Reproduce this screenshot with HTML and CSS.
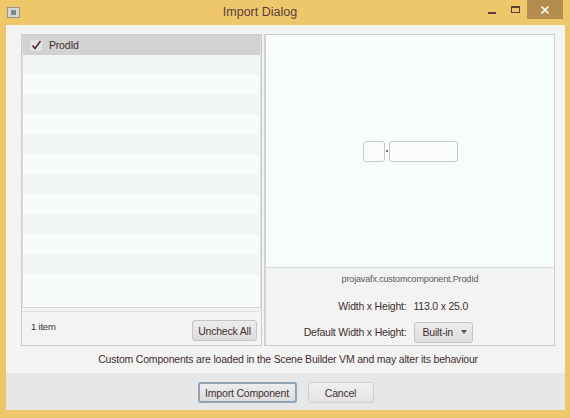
FILE: index.html
```html
<!DOCTYPE html>
<html>
<head>
<meta charset="utf-8">
<link rel="stylesheet" href="styles.css">
</head>
<body>
<div class="window">
  <div class="titlebar">
    <div class="appicon"><div class="appicon-inner"></div></div>
    <div class="title">Import Dialog</div>
    <div class="controls">
      <div class="ctl min"><div class="min-bar"></div></div>
      <div class="ctl max"><div class="max-box"></div></div>
      <div class="ctl close">
        <svg width="10" height="10" viewBox="0 0 10 10"><path d="M1.5 1.5 L8.5 8.5 M8.5 1.5 L1.5 8.5" stroke="#fff" stroke-width="1.6"/></svg>
      </div>
    </div>
  </div>
  <div class="content">
    <div class="main">
      <div class="panels">
        <div class="left">
          <div class="list">
            <div class="row selected">
              <div class="checkbox">
                <svg width="11" height="10" viewBox="0 0 11 10"><path d="M1.5 5.5 L4 8.5 L9.5 1" fill="none" stroke="#5a2626" stroke-width="1.6"/></svg>
              </div>
              <span>ProdId</span>
            </div>
            <div class="row"></div><div class="row"></div><div class="row"></div>
            <div class="row"></div><div class="row"></div><div class="row"></div>
            <div class="row"></div><div class="row"></div><div class="row"></div>
            <div class="row"></div><div class="row"></div><div class="row"></div>
          </div>
          <div class="footer">
            <span class="count">1 item</span>
            <button class="btn">Uncheck All</button>
          </div>
        </div>
        <div class="right">
          <div class="preview">
            <div class="comp">
              <div class="box small"></div>
              <div class="dot"></div>
              <div class="box big"></div>
            </div>
          </div>
          <div class="classname">projavafx.customcomponent.ProdId</div>
          <div class="info">
            <div class="lbl">Width x Height:</div>
            <div class="val">113.0 x 25.0</div>
            <div class="lbl">Default Width x Height:</div>
            <div class="val"><div class="combo">Built-in <span class="arrow"></span></div></div>
          </div>
        </div>
      </div>
      <div class="message">Custom Components are loaded in the Scene Builder VM and may alter its behaviour</div>
    </div>
    <div class="buttonbar">
      <button class="btn default">Import Component</button>
      <button class="btn cancel">Cancel</button>
    </div>
  </div>
</div>
</body>
</html>
```

FILE: styles.css
```css
* { box-sizing: border-box; }
html, body { margin: 0; padding: 0; }
body {
  width: 570px;
  height: 418px;
  background: #efc76b;
  font-family: "Liberation Sans", Arial, sans-serif;
  font-size: 10.5px;
  letter-spacing: -0.2px;
  color: #42302f;
  overflow: hidden;
}
.window {
  height: 418px;
  display: flex;
  flex-direction: column;
}
.titlebar {
  height: 25px;
  position: relative;
  display: flex;
  align-items: center;
  justify-content: center;
}
.appicon {
  position: absolute;
  left: 7px;
  top: 7px;
  width: 13px;
  height: 11px;
  background: #d8d6cf;
  border: 1px solid #9a9488;
}
.appicon-inner {
  margin: 2px 3px;
  width: 5px;
  height: 5px;
  background: #7f8a92;
}
.title {
  font-size: 12.5px;
  letter-spacing: 0;
  color: #5c3c3c;
  margin-top: -1px;
  margin-left: -50px;
}
.controls {
  position: absolute;
  right: 7px;
  top: 0;
  display: flex;
  height: 19px;
}
.ctl {
  display: flex;
  align-items: center;
  justify-content: center;
}
.min { width: 24px; }
.min-bar { width: 8px; height: 2px; background: #5c3c3c; margin-top: 6px; }
.max { width: 23px; }
.max-box { width: 9px; height: 7px; border: 1px solid #5c3c3c; border-top-width: 2px; }
.close {
  width: 36px;
  background: #b58c50;
}
.content {
  flex: 1;
  margin: 0 5px 8px 6px;
  background: #f3f3f3;
  display: flex;
  flex-direction: column;
}
.main {
  flex: 1;
  padding: 9px 10px 0 15px;
  display: flex;
  flex-direction: column;
}
.panels {
  display: flex;
  gap: 2px;
  height: 312px;
}
.left {
  width: 241px;
  border: 1px solid #cbcbcb;
  display: flex;
  flex-direction: column;
  background: #f3f3f3;
}
.list {
  height: 273px;
  flex-shrink: 0;
  background: #f7fbfb;
  border-left: 1px solid #dcdcdc;
  border-right: 1px solid #dcdcdc;
  border-bottom: 1px solid #d4d4d4;
  overflow: hidden;
}
.row {
  height: 20px;
  display: flex;
  align-items: center;
}
.row:nth-child(even) { background: #f2f5f5; }
.row.selected {
  background: #d2d2d2;
  padding-left: 7px;
}
.checkbox {
  width: 12px;
  height: 11px;
  background: #e4e4e4;
  border-radius: 2px;
  margin-right: 7px;
  display: flex;
  align-items: center;
  justify-content: center;
}
.footer {
  flex: 1;
  margin-top: 3px;
  border-top: 1px solid #e2e2e2;
  display: flex;
  align-items: center;
  justify-content: space-between;
  padding: 4px 4px 0 9px;
}
.count { font-size: 9.5px; margin-top: -8px; }
.btn {
  font-family: inherit;
  font-size: 10.5px;
  letter-spacing: -0.2px;
  color: #42302f;
  height: 21px;
  padding: 0 6px;
  border: 1px solid #c4c4c4;
  border-radius: 3px;
  background: linear-gradient(#ededed, #dcdcdc);
  white-space: nowrap;
}
.footer .btn { width: 65px; padding: 0; }
.right {
  flex: 1;
  border: 1px solid #cdcdcd;
  border-left: 2px solid #d2d2d2;
  display: flex;
  flex-direction: column;
}
.preview {
  height: 233px;
  flex-shrink: 0;
  background: #f7fcfc;
  border-bottom: 1px solid #dadada;
  display: flex;
  align-items: center;
  justify-content: center;
}
.comp {
  display: flex;
  align-items: center;
  margin-left: 1px;
}
.box {
  height: 21px;
  border: 1px solid #c9c9c9;
  border-radius: 3px;
  background: #fbfdfd;
}
.box.small { width: 22px; }
.box.big { width: 69px; }
.dot { width: 2px; height: 2px; background: #777; margin: 0 1px; }
.classname {
  text-align: center;
  font-size: 9px;
  letter-spacing: -0.15px;
  color: #5a5a5a;
  margin-top: 5px;
  height: 13px;
  line-height: 13px;
  flex-shrink: 0;
}
.info {
  display: grid;
  grid-template-columns: 1fr 1fr;
  column-gap: 7px;
  margin-top: 7px;
  align-items: center;
  flex-shrink: 0;
}
.lbl { text-align: right; height: 26px; line-height: 26px; }
.val { height: 26px; line-height: 26px; display: flex; align-items: center; }
.combo {
  height: 21px;
  width: 59px;
  border: 1px solid #c4c4c4;
  border-radius: 3px;
  background: linear-gradient(#ededed, #dcdcdc);
  display: flex;
  align-items: center;
  padding-left: 8px;
  line-height: 19px;
}
.arrow {
  margin-left: 8px;
  width: 0; height: 0;
  border-left: 3px solid transparent;
  border-right: 3px solid transparent;
  border-top: 4px solid #555;
}
.message {
  height: 27px;
  line-height: 27px;
  text-align: center;
}
.buttonbar {
  height: 37px;
  background: #e7e7e7;
  display: flex;
  justify-content: center;
  align-items: flex-start;
  gap: 11px;
  padding-top: 9px;
}
.btn.default {
  width: 99px;
  padding: 0;
  border: 2px solid #8ea3b4;
}
.btn.cancel { width: 66px; padding: 0; border-color: #cfcfcf; background: linear-gradient(#f0f0f0, #e3e3e3); }
```
